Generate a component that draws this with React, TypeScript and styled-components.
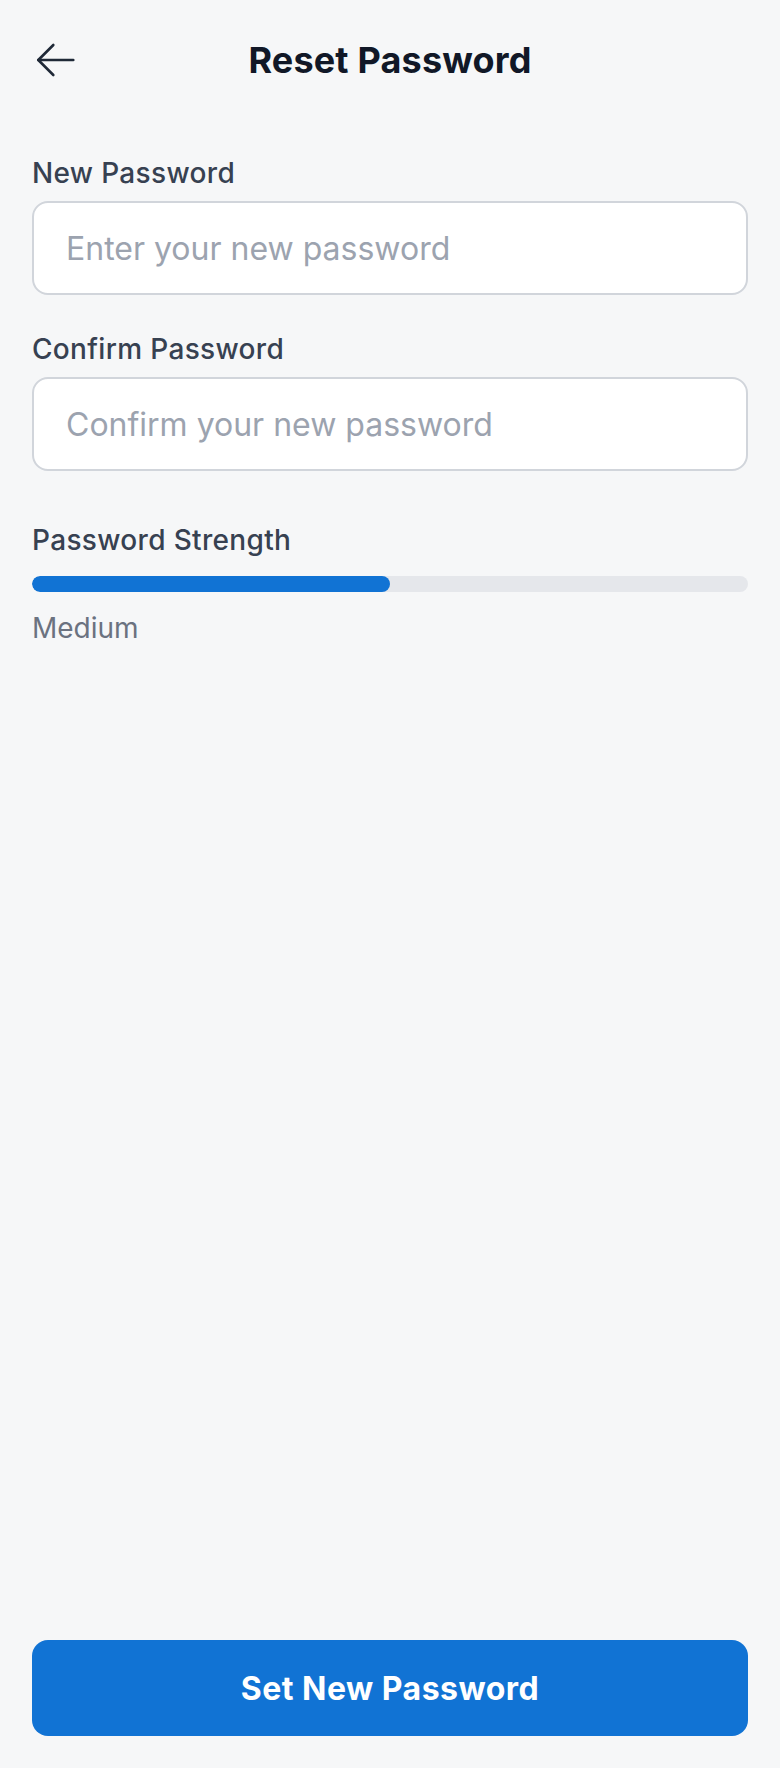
import React from 'react';
import styled, { createGlobalStyle } from 'styled-components';

const GlobalStyle = createGlobalStyle`
  html, body {
    margin: 0;
    padding: 0;
    background: #f6f7f8;
  }
  body {
    font-family: Inter, "Noto Sans", "Liberation Sans", sans-serif;
  }
  * {
    box-sizing: border-box;
  }
`;

const BackArrow = () => (
  <svg width="48" height="48" viewBox="0 0 48 48" fill="none" stroke="#1f2937" strokeWidth="2.6" strokeLinecap="round" strokeLinejoin="round">
    <path d="M41.3 24H6.3" />
    <path d="M21.3 9L6.3 24l15 15" />
  </svg>
);

const Index = () => {
  const [strength] = React.useState(50);

  return (
    <Page>
      <GlobalStyle />
      <Header>
        <IconButton aria-label="Back">
          <BackArrow />
        </IconButton>
        <Title>Reset Password</Title>
        <span />
      </Header>

      <Form>
        <Field>
          <Label>New Password</Label>
          <Input type="password" placeholder="Enter your new password" />
        </Field>
        <Field>
          <Label>Confirm Password</Label>
          <Input type="password" placeholder="Confirm your new password" />
        </Field>

        <Strength>
          <Label>Password Strength</Label>
          <Track>
            <Fill style={{ width: `${strength}%` }} />
          </Track>
          <StrengthText>Medium</StrengthText>
        </Strength>
      </Form>

      <Footer>
        <PrimaryButton>Set New Password</PrimaryButton>
      </Footer>
    </Page>
  );
};
export default Index;

const Page = styled.div`
  min-height: 100vh;
  display: flex;
  flex-direction: column;
  padding: 0 32px;
`;

const Header = styled.header`
  height: 120px;
  display: grid;
  grid-template-columns: 48px 1fr 48px;
  align-items: center;
`;

const IconButton = styled.button`
  width: 48px;
  height: 48px;
  padding: 0;
  border: none;
  background: transparent;
  display: flex;
  align-items: center;
  justify-content: center;
`;

const Title = styled.h1`
  margin: 0;
  text-align: center;
  font-size: 36px;
  line-height: 44px;
  font-weight: 700;
  letter-spacing: 0.005em;
  color: #111827;
`;

const Form = styled.div`
  padding-top: 33px;
  display: flex;
  flex-direction: column;
`;

const Field = styled.div`
  display: flex;
  flex-direction: column;
  margin-bottom: 34px;
`;

const Label = styled.label`
  font-size: 28px;
  line-height: 40px;
  font-weight: 500;
  letter-spacing: 0.012em;
  color: #374151;
  margin-bottom: 8px;
`;

const Input = styled.input`
  height: 94px;
  width: 100%;
  padding: 0 32px;
  border: 2px solid #d1d5db;
  border-radius: 16px;
  background: #ffffff;
  font-family: inherit;
  font-size: 32px;
  color: #111827;
  outline: none;
  &::placeholder {
    color: #9ca3af;
  }
`;

const Strength = styled.div`
  display: flex;
  flex-direction: column;
  margin-top: 15px;
`;

const Track = styled.div`
  height: 16px;
  margin-top: 8px;
  border-radius: 8px;
  background: #e5e7eb;
  overflow: hidden;
`;

const Fill = styled.div`
  height: 100%;
  border-radius: 8px;
  background: #1173d4;
`;

const StrengthText = styled.div`
  margin-top: 16px;
  font-size: 28px;
  line-height: 40px;
  color: #6b7280;
`;

const Footer = styled.div`
  margin-top: auto;
  padding-bottom: 32px;
`;

const PrimaryButton = styled.button`
  width: 100%;
  height: 96px;
  border: none;
  border-radius: 16px;
  background: #1173d4;
  color: #ffffff;
  font-family: inherit;
  font-size: 32px;
  font-weight: 700;
  letter-spacing: 0.015em;
`;
